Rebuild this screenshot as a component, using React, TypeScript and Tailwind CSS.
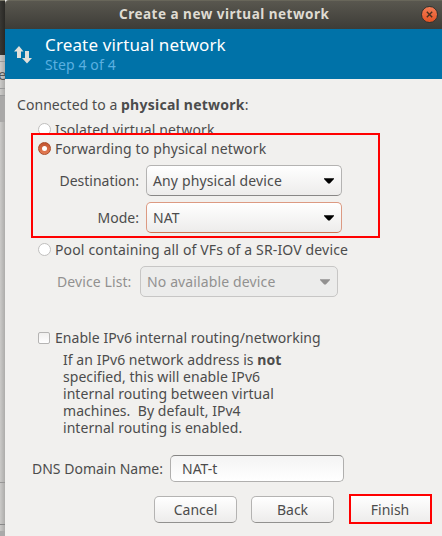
import type { ReactNode } from "react";

function Arrow({ muted = false }: { muted?: boolean }) {
  return (
    <svg width="10" height="6" viewBox="0 0 10 6" className="shrink-0">
      <path d="M0 0.3H10V1L5.8 5.6H4.2L0 1Z" fill={muted ? "#929190" : "#000"} />
    </svg>
  );
}

function Radio({ on = false }: { on?: boolean }) {
  return on ? (
    <span className="flex size-[13px] shrink-0 items-center justify-center rounded-full border border-[#a94b29] bg-linear-to-b from-[#c25430] to-[#e57c54]">
      <span className="size-[5px] rounded-full bg-white" />
    </span>
  ) : (
    <span className="size-[13px] shrink-0 rounded-full border border-[#c0bfbe] bg-white" />
  );
}

function Select({ children, look }: { children: ReactNode; look: string }) {
  return (
    <div className={`flex h-[31px] items-center justify-between rounded-[5px] border pr-[7px] pl-[6px] tracking-[0.13px] ${look}`}>
      {children}
    </div>
  );
}

function Button({ children }: { children: ReactNode }) {
  return (
    <button className="h-[27px] w-[83px] rounded-[5px] border border-[#b4b3b2] border-b-[#92918f] bg-linear-to-b from-white to-[#edeceb] text-center">
      {children}
    </button>
  );
}

export default function App() {
  return (
    <div className="flex h-[536px] w-[442px] overflow-hidden bg-[#f1f0ee] font-['Noto_Sans','Open_Sans',sans-serif] text-[14px] leading-[17px] whitespace-nowrap text-[#4c4c4c]">
      <aside className="flex w-[5px] shrink-0 flex-col overflow-hidden bg-linear-to-r from-[#cbcac8] to-[#adacaa]">
        <div className="h-[55px] shrink-0 border-t border-[#7a7869] bg-linear-to-r from-[#393834] to-[#292825]" />
        <div className="h-[7px] shrink-0 border-b border-[#999]" />
        <div className="h-[27px] shrink-0 border-b border-[#999] pt-[4px] text-[15px] text-[#555]">
          <span className="-ml-[2px]">e</span>
        </div>
        <div className="h-[7px] shrink-0 border-b border-[#999]" />
        <div className="h-[26px] shrink-0 bg-[#a9a8a7]" />
        <div className="h-[361px] shrink-0 border-b border-[#989796]" />
        <div className="h-[42px] shrink-0 border-b border-[#888]" />
        <div className="h-[6px] shrink-0" />
        <div className="grow bg-[#aaa]" />
      </aside>

      <main className="flex w-[437px] shrink-0 flex-col">
        <header className="flex h-[29px] shrink-0 items-center rounded-tl-[4px] border-t border-[#68665a] bg-linear-to-b from-[#59574f] to-[#3d3c37] pr-[4px] pb-[1px] pl-[114px]">
          <h1 className="grow text-[13.5px] font-bold tracking-[0.5px] text-[#dfdbd2]">Create a new virtual network</h1>
          <span className="flex size-[17px] items-center justify-center rounded-full border border-[#33322e] bg-linear-to-b from-[#f47c54] to-[#e55222]">
            <svg width="7" height="7" viewBox="0 0 7 7">
              <path d="M0.8 0.8L6.2 6.2M6.2 0.8L0.8 6.2" stroke="#49301f" strokeWidth="1.4" />
            </svg>
          </span>
        </header>

        <div className="flex h-[50px] shrink-0 bg-[#0072a8] pl-[9px]">
          <svg width="18" height="18" viewBox="0 0 18 18" className="mt-[17px] shrink-0">
            <path d="M0 5.5L5 0L9.5 5.5H7V12H3V5.5ZM11 5H15V12H18L13 17.5L8 12H11Z" fill="#e2e0da" />
          </svg>
          <div className="ml-[13px]">
            <h2 className="mt-[6px] h-[20px] text-[17px] leading-[20px] tracking-[0.14px] text-white">Create virtual network</h2>
            <p className="mt-[1px] text-[14px] tracking-[0.12px] text-[#5bb0e0]">Step 4 of 4</p>
          </div>
        </div>

        <p className="mt-[17px] h-[17px] pl-[12px] tracking-[0.06px]">
          Connected to a <b className="tracking-[0.25px]">physical network</b>:
        </p>

        <div className="mt-[8px] flex h-[12px] shrink-0 gap-[4px] overflow-hidden pl-[33px]">
          <span className="mt-[2px] flex"><Radio /></span>
          <span className="tracking-[0.14px]">Isolated virtual network</span>
        </div>

        <section className="ml-[26px] flex h-[105px] w-[349px] shrink-0 flex-col border-2 border-[#ff0000] pl-[5px]">
          <div className="mt-[5px] flex h-[17px] items-center gap-[4px]">
            <Radio on />
            <span className="tracking-[0.14px]">Forwarding to physical network</span>
          </div>
          <div className="mt-[8px] flex items-center">
            <span className="w-[101px] text-right">Destination:</span>
            <div className="ml-[7px] w-[196px]">
              <Select look="border-[#b4b3b2] border-b-[#888786] bg-linear-to-b from-white to-[#edeceb]">
                Any physical device
                <Arrow />
              </Select>
            </div>
          </div>
          <div className="mt-[6px] flex items-center">
            <span className="w-[101px] text-right">Mode:</span>
            <div className="ml-[7px] w-[196px]">
              <Select look="border-[#dc9a82] border-b-[#cf7452] bg-linear-to-b from-white to-[#edeceb]">
                NAT
                <Arrow />
              </Select>
            </div>
          </div>
        </section>

        <div className="mt-[3px] flex h-[17px] items-center gap-[4px] pl-[33px]">
          <Radio />
          <span className="tracking-[0.15px]">Pool containing all of VFs of a SR-IOV device</span>
        </div>
        <div className="mt-[8px] flex items-center pl-[52px] text-[#929190]">
          <span className="w-[76px] tracking-[0.1px]">Device List:</span>
          <div className="ml-[7px] w-[198px]">
            <Select look="border-[#c7c6c5] bg-[#ececeb]">
              No available device
              <Arrow muted />
            </Select>
          </div>
        </div>

        <div className="mt-[32px] flex h-[17px] items-center gap-[5px] pl-[33px]">
          <span className="size-[12px] rounded-[2px] border border-[#b5b4b3] bg-linear-to-b from-[#f0efee] to-white" />
          <span className="tracking-[0.05px]">Enable IPv6 internal routing/networking</span>
        </div>
        <p className="mt-[5px] h-[85px] pl-[58px] tracking-[0.05px] whitespace-pre">
          If an IPv6 network address is <b>not</b>{"\n"}
          specified, this will enable IPv6{"\n"}
          internal routing between virtual{"\n"}
          {"machines.  By default, IPv4\n"}
          internal routing is enabled.
        </p>

        <label className="mt-[19px] flex h-[27px] shrink-0 items-center pl-[27px]">
          <span className="w-[131px]">DNS Domain Name:</span>
          <input
            defaultValue="NAT-t"
            className="ml-[7px] h-[27px] w-[174px] rounded-[5px] border border-[#b0afae] border-t-[#858483] bg-linear-to-b from-[#f4f4f4] to-white pl-[11px]"
          />
        </label>

        <footer className="mt-[12px] flex items-start pl-[149px]">
          <div className="mt-[2px] flex gap-[14px]">
            <Button>Cancel</Button>
            <Button>Back</Button>
          </div>
          <button className="ml-[15px] h-[30px] w-[83px] border-2 border-[#ff0000] bg-linear-to-b from-white to-[#edeceb] pr-[1px]">
            Finish
          </button>
        </footer>
      </main>
    </div>
  );
}
